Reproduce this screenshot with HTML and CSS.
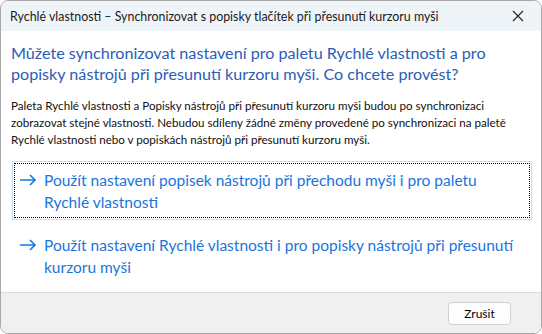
FILE: index.html
```html
<!DOCTYPE html>
<html lang="cs">
<head>
  <meta charset="UTF-8" />
  <title>Rychlé vlastnosti</title>
  <link rel="stylesheet" href="styles.css">
</head>
<body>

<div class="window">
  <div class="titlebar">
    <span class="title">Rychlé vlastnosti – Synchronizovat s popisky tlačítek při přesunutí kurzoru myši</span>
    <button class="close" aria-label="Zavřít">
      <svg width="12" height="12" viewBox="0 0 12 12"><path d="M1 1 L11 11 M11 1 L1 11" stroke="#222" stroke-width="1.1" fill="none"/></svg>
    </button>
  </div>

  <div class="content">
    <h1 class="instruction">Můžete synchronizovat nastavení pro paletu Rychlé vlastnosti a pro popisky nástrojů při přesunutí kurzoru myši. Co chcete provést?</h1>
    <p class="text">Paleta Rychlé vlastnosti a Popisky nástrojů při přesunutí kurzoru myši budou po synchronizaci zobrazovat stejné vlastnosti. Nebudou sdíleny žádné změny provedené po synchronizaci na paletě Rychlé vlastnosti nebo v popiskách nástrojů při přesunutí kurzoru myši.</p>

    <div class="commands">
      <button class="cmd focused">
        <span class="arrow"><svg width="18" height="12" viewBox="0 0 18 12"><path d="M1 6 H16 M11 1 L16 6 L11 11" stroke="#1a7ae0" stroke-width="1.7" fill="none"/></svg></span>
        <span class="cmd-text">Použít nastavení popisek nástrojů při přechodu myši i pro paletu<br>Rychlé vlastnosti</span>
      </button>
      <button class="cmd">
        <span class="arrow"><svg width="18" height="12" viewBox="0 0 18 12"><path d="M1 6 H16 M11 1 L16 6 L11 11" stroke="#1a7ae0" stroke-width="1.7" fill="none"/></svg></span>
        <span class="cmd-text">Použít nastavení Rychlé vlastnosti i pro popisky nástrojů při přesunutí<br>kurzoru myši</span>
      </button>
    </div>
  </div>

  <div class="footer">
    <button class="btn">Zrušit</button>
  </div>
</div>

</body>
</html>
```

FILE: styles.css
```css
html, body {
  margin: 0;
  height: 100%;
}

body {
  font-family: Lato, "Noto Sans", sans-serif;
  background: #fff;
  color: #000;
}

.window {
  box-sizing: border-box;
  height: 334px;
  width: 542px;
  border: 1px solid #a8a8a8;
  border-radius: 8px;
  overflow: hidden;
  display: flex;
  flex-direction: column;
  background: #fff;
}

.titlebar {
  height: 30px;
  background: #eff4f9;
  display: flex;
  align-items: center;
  justify-content: space-between;
  padding-left: 9px;
  flex-shrink: 0;
}

.title {
  font-size: 12.4px;
  color: #1a1a1a;
}

.close {
  width: 46px;
  height: 30px;
  border: none;
  background: transparent;
  display: flex;
  align-items: center;
  justify-content: center;
  padding: 0;
}

.content {
  flex: 1;
  padding: 11px 10px 0 10px;
}

.instruction {
  margin: 0;
  font-size: 16.15px;
  font-weight: normal;
  line-height: 21px;
  color: #2a5db5;
}

.text {
  margin: 13px 0 0 0;
  font-size: 11.6px;
  line-height: 17px;
  color: #111;
}

.commands {
  margin-top: 13px;
  display: flex;
  flex-direction: column;
  gap: 6px;
}

.cmd {
  box-sizing: border-box;
  width: 520px;
  height: 59px;
  margin-left: 1px;
  display: flex;
  align-items: flex-start;
  text-align: left;
  font-family: inherit;
  background: #fff;
  border: 1px solid transparent;
  padding: 7px 4px 8px 6px;
  position: relative;
  cursor: pointer;
}

.cmd.focused {
  border-color: #c4e0f7;
}

.cmd.focused::after {
  content: "";
  position: absolute;
  inset: 1px;
  border: 1px dotted #000;
}

.arrow {
  width: 25px;
  height: 22px;
  display: flex;
  align-items: center;
  flex-shrink: 0;
}

.cmd-text {
  font-size: 15.5px;
  line-height: 22px;
  color: #1b74dc;
  white-space: nowrap;
}

.footer {
  height: 40px;
  flex-shrink: 0;
  background: #f0f0f0;
  border-top: 1px solid #dcdcdc;
  display: flex;
  align-items: center;
  justify-content: flex-end;
  padding-right: 30px;
}

.btn {
  width: 63px;
  height: 23px;
  background: #fdfdfd;
  border: 1px solid #d0d0d0;
  border-radius: 4px;
  font-family: inherit;
  font-size: 12px;
  color: #000;
  padding: 0;
}
```
